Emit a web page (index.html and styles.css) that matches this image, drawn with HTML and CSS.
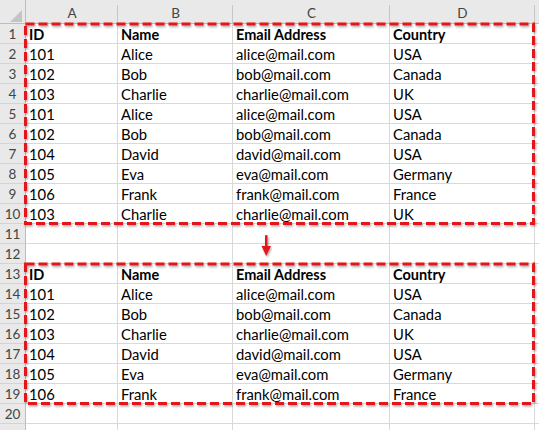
FILE: index.html
```html
<!DOCTYPE html>
<html>
<head>
<meta charset="utf-8">
<link rel="stylesheet" href="styles.css">
</head>
<body>
<div class="sheet">
  <div class="grid">
    <div class="corner"><svg width="25" height="24" viewBox="0 0 25 24"><polygon points="22,10 22,22 10,22" fill="#c4c4c4"/></svg></div>
    <div class="ch">A</div><div class="ch">B</div><div class="ch">C</div><div class="ch">D</div><div class="ch last"></div>

    <div class="rh">1</div><div class="c b">ID</div><div class="c b">Name</div><div class="c b">Email Address</div><div class="c b">Country</div><div class="c"></div>
    <div class="rh">2</div><div class="c">101</div><div class="c">Alice</div><div class="c">alice@mail.com</div><div class="c">USA</div><div class="c"></div>
    <div class="rh">3</div><div class="c">102</div><div class="c">Bob</div><div class="c">bob@mail.com</div><div class="c">Canada</div><div class="c"></div>
    <div class="rh">4</div><div class="c">103</div><div class="c">Charlie</div><div class="c">charlie@mail.com</div><div class="c">UK</div><div class="c"></div>
    <div class="rh">5</div><div class="c">101</div><div class="c">Alice</div><div class="c">alice@mail.com</div><div class="c">USA</div><div class="c"></div>
    <div class="rh">6</div><div class="c">102</div><div class="c">Bob</div><div class="c">bob@mail.com</div><div class="c">Canada</div><div class="c"></div>
    <div class="rh">7</div><div class="c">104</div><div class="c">David</div><div class="c">david@mail.com</div><div class="c">USA</div><div class="c"></div>
    <div class="rh">8</div><div class="c">105</div><div class="c">Eva</div><div class="c">eva@mail.com</div><div class="c">Germany</div><div class="c"></div>
    <div class="rh">9</div><div class="c">106</div><div class="c">Frank</div><div class="c">frank@mail.com</div><div class="c">France</div><div class="c"></div>
    <div class="rh">10</div><div class="c">103</div><div class="c">Charlie</div><div class="c">charlie@mail.com</div><div class="c">UK</div><div class="c"></div>
    <div class="rh">11</div><div class="c"></div><div class="c"></div><div class="c"></div><div class="c"></div><div class="c"></div>
    <div class="rh">12</div><div class="c"></div><div class="c"></div><div class="c"></div><div class="c"></div><div class="c"></div>
    <div class="rh">13</div><div class="c b">ID</div><div class="c b">Name</div><div class="c b">Email Address</div><div class="c b">Country</div><div class="c"></div>
    <div class="rh">14</div><div class="c">101</div><div class="c">Alice</div><div class="c">alice@mail.com</div><div class="c">USA</div><div class="c"></div>
    <div class="rh">15</div><div class="c">102</div><div class="c">Bob</div><div class="c">bob@mail.com</div><div class="c">Canada</div><div class="c"></div>
    <div class="rh">16</div><div class="c">103</div><div class="c">Charlie</div><div class="c">charlie@mail.com</div><div class="c">UK</div><div class="c"></div>
    <div class="rh">17</div><div class="c">104</div><div class="c">David</div><div class="c">david@mail.com</div><div class="c">USA</div><div class="c"></div>
    <div class="rh">18</div><div class="c">105</div><div class="c">Eva</div><div class="c">eva@mail.com</div><div class="c">Germany</div><div class="c"></div>
    <div class="rh">19</div><div class="c">106</div><div class="c">Frank</div><div class="c">frank@mail.com</div><div class="c">France</div><div class="c"></div>
    <div class="rh">20</div><div class="c"></div><div class="c"></div><div class="c"></div><div class="c"></div><div class="c"></div>
    <div class="rh"></div><div class="c"></div><div class="c"></div><div class="c"></div><div class="c"></div><div class="c"></div>
  </div>
  <svg class="marks" width="539" height="430" viewBox="0 0 539 430">
    <defs>
      <filter id="sh" x="-5%" y="-5%" width="110%" height="110%">
        <feDropShadow dx="1" dy="1.5" stdDeviation="1" flood-color="#000" flood-opacity="0.35"/>
      </filter>
    </defs>
    <g filter="url(#sh)" fill="none" stroke="#e3151d" stroke-width="3" stroke-dasharray="9 4">
      <rect x="25.5" y="24" width="508" height="199.5"/>
      <rect x="25.5" y="264" width="508" height="139.5"/>
    </g>
    <g filter="url(#sh)" fill="#e3151d">
      <rect x="265" y="235" width="2.5" height="12" rx="1"/>
      <polygon points="261.5,246 271,246 266.2,256"/>
    </g>
  </svg>
</div>
</body>
</html>
```

FILE: styles.css
```css
html, body {
  margin: 0;
  padding: 0;
  background: #ffffff;
  overflow: hidden;
}

.sheet {
  position: relative;
  width: 539px;
  height: 430px;
  overflow: hidden;
}

.grid {
  display: grid;
  grid-template-columns: 26px 92px 115px 157px 145px 40px;
  grid-template-rows: 24px repeat(21, 20px);
  font-family: "Lato", "Open Sans", sans-serif;
  font-size: 14.8px;
  color: #000;
}

.corner {
  background: #e9e9e9;
  border-right: 1px solid #bdbdbd;
  border-bottom: 1px solid #bdbdbd;
  box-sizing: border-box;
  line-height: 0;
}

.ch {
  position: relative;
  background: #e9e9e9;
  border-bottom: 1px solid #bdbdbd;
  box-sizing: border-box;
  display: flex;
  align-items: center;
  justify-content: center;
  padding-top: 3px;
  font-size: 13.5px;
  color: #444;
}

.ch::after {
  content: "";
  position: absolute;
  right: 0;
  top: 5px;
  bottom: 0;
  width: 1px;
  background: #c6c6c6;
}

.ch.last::after {
  display: none;
}

.rh {
  background: #e9e9e9;
  border-right: 1px solid #bdbdbd;
  border-bottom: 1px solid #d4d4d4;
  box-sizing: border-box;
  display: flex;
  align-items: center;
  justify-content: center;
  padding-top: 1px;
  font-size: 13.5px;
  color: #444;
}

.c {
  border-right: 1px solid #d9d9d9;
  border-bottom: 1px solid #d9d9d9;
  box-sizing: border-box;
  padding-left: 3px;
  padding-top: 1px;
  display: flex;
  align-items: center;
  white-space: nowrap;
  overflow: hidden;
}

.b {
  font-weight: 700;
  font-size: 14.5px;
}

.marks {
  position: absolute;
  left: 0;
  top: 0;
  pointer-events: none;
}
```
